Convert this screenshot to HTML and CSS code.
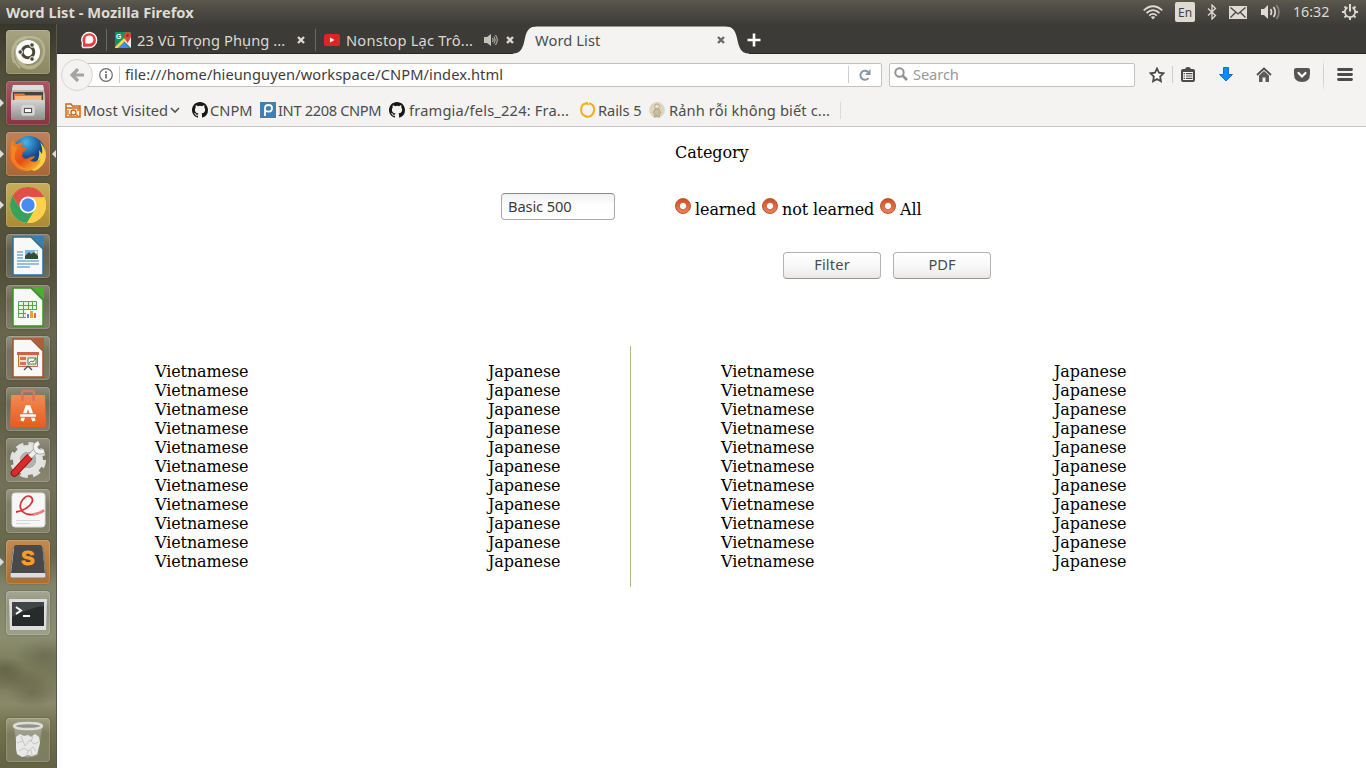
FILE: index.html
```html
<!DOCTYPE html>
<html lang="vi">
<head>
<meta charset="utf-8">
<title>Word List</title>
<link rel="stylesheet" href="styles.css">
</head>
<body>
<header class="panel">
  <span class="panel-title">Word List - Mozilla Firefox</span>
  <div class="indicators">
    <svg class="i-wifi" width="20" height="15" viewBox="0 0 20 15" fill="none" stroke="#dfdbd2" stroke-width="1.7"><path d="M.7 5.3Q10-2.8 19.3 5.3M3.5 8Q10 2.2 16.5 8M6.2 10.6Q10 7.3 13.8 10.6"/><path d="M7.8 12Q10 10.5 12.200 12L10 14.500z" fill="#dfdbd2" stroke="none"/></svg>
    <span class="lang">En</span>
    <svg class="i-bt" width="10" height="16" viewBox="0 0 10 16" fill="none" stroke="#dfdbd2" stroke-width="1.3"><path d="M1 4.500 8.500 11.500 5 15V1l3.500 3.500L1 11.500"/></svg>
    <svg class="i-mail" width="18" height="13" viewBox="0 0 18 13"><path fill="#dfdbd2" d="M0 0h18v13H0z"/><path d="m1.500 1.500 7.500 6.500 7.500-6.500M1.500 11.500l5-5M16.500 11.500l-5-5" fill="none" stroke="#48463f" stroke-width="1.300"/></svg>
    <svg class="i-vol" width="20" height="16" viewBox="0 0 20 16" fill="none" stroke-width="1.700"><path fill="#dfdbd2" d="M0 5h3l4-4v14l-4-4H0z"/><path stroke="#dfdbd2" d="M9.500 5q2 3 0 6M12.500 3q3.500 5 0 10"/><path stroke="#86837a" d="M15.500 1q5 7 0 14"/></svg>
    <span class="clock">16:32</span>
    <svg class="i-gear" width="16" height="16" viewBox="0 0 16 16" fill="none" stroke="#dfdbd2"><path stroke-width="1.800" d="M5.500 3.400a5.200 5.200 0 1 0 5 0"/><path stroke-width="2" d="M8 0v7.500M8 13v3M0 8h3M13 8h3"/><path stroke-width="1.800" d="m2.500 2.500 1.800 1.800M13.500 2.500l-1.800 1.800M2.500 13.500l1.800-1.800M13.500 13.500l-1.800-1.800"/></svg>
  </div>
</header>
<div class="desktop">
<nav class="launcher">
  <div class="tile t-dash"><svg viewBox="0 0 44 44"><g fill="none" stroke="#c9c5a5" stroke-width="2" opacity=".65"><path d="M8 33C2 15 13 4 29 8M14 38C1 26 7 9 21 8M30 37C15 43 7 29 11 15M37 28C30 43 16 38 11 26M36 13C43 28 31 39 18 36M22 7C38 6 42 19 34 32"/></g><circle cx="22" cy="22" r="12" fill="#fff"/><circle cx="22" cy="22" r="5.800" fill="none" stroke="#4b4734" stroke-width="3"/><g fill="#4b4734" stroke="#fff" stroke-width="1"><circle cx="14.200" cy="22" r="2.300"/><circle cx="26" cy="15" r="2.300"/><circle cx="26" cy="29" r="2.300"/></g></svg></div>
  <div class="tile t-files run"><svg viewBox="0 0 44 44"><defs><linearGradient id="cab" x2="0" y2="1"><stop stop-color="#d4d4d2"/><stop offset="1" stop-color="#8d8d8c"/></linearGradient></defs><path fill="#b8b8b6" d="M7 4h30l2 10v24H5V14z"/><path fill="#dcdcdb" d="M7 4h30l1 5H6z"/><path fill="#444" d="M7 11h30v9H7z"/><path fill="#e37839" d="M8 12.500h10l1.500 1.500H36v6H8z"/><path fill="#ffb878" d="M9 15h26v4H9z"/><rect x="5" y="19" width="34" height="20" rx="1.500" fill="url(#cab)"/><rect x="16" y="25" width="12" height="9" rx="1" fill="#c9c9c8" stroke="#e8e8e8"/><rect x="18.500" y="27.500" width="7" height="4" fill="#fff" stroke="#555"/></svg></div>
  <div class="tile t-firefox run focus"><svg viewBox="0 0 44 44"><defs><radialGradient id="globe" cx=".4" cy=".2"><stop stop-color="#49b6e8"/><stop offset="1" stop-color="#13478d"/></radialGradient><linearGradient id="fox" x2=".8" y2="1"><stop stop-color="#f68b1e"/><stop offset=".6" stop-color="#e44d18"/><stop offset="1" stop-color="#f7b62d"/></linearGradient></defs><circle cx="23" cy="20" r="16" fill="url(#globe)"/><path fill="#f9d244" d="M34 10q6 6 6 14-1 11-12 15l-9-5c13 0 15-8 14-16l3 4q1-6-2-12z"/><path fill="url(#fox)" d="M7 7q1 5 4 5 4-2 7-1-3 2-3 4l6 1q0 2-4 4l-1 4q3 5 8 1l5-1q-1 3-5 4 4 4 11-1-3 11-14 12Q8 39 4 28 2 17 7 7z"/><path fill="#f99c2b" d="M6 12q2 4 6 3-4 5-3 12 4 9 14 10Q8 39 5 27z" opacity=".55"/></svg></div>
  <div class="tile t-chrome run"><svg viewBox="0 0 44 44"><circle cx="22" cy="22" r="18" fill="#ffd04c"/><path fill="#df5148" d="M6.400 13A18 18 0 0 1 37.600 13L38.200 14H22z"/><path fill="#38a15c" d="M6.400 13A18 18 0 0 0 21 40l8-14-7-4-8 3z"/><path fill="#df5148" d="M6.400 13 14 25.500 22 14l-8-6z"/><path fill="#ffd04c" d="M22 14h16.200A18 18 0 0 1 21 40l9-14z"/><circle cx="22" cy="22" r="8.500" fill="#fff"/><circle cx="22" cy="22" r="6.700" fill="#4a8af4"/></svg></div>
  <div class="tile"><svg viewBox="0 0 44 44"><path fill="#f8f8f8" stroke="#286f9f" stroke-width="1.500" d="M7 3h18l12 12v26H7z"/><path fill="#3681b4" d="M26 2h12v12z"/><path stroke="#3385bb" stroke-width="1.200" d="M11 18h6M11 21h6M11 24h6M11 27h22M11 30h22M11 33h13"/><path fill="#77bce5" d="M19 16h13v9H19z"/><path fill="#354d33" d="m19 22 4-4 2 2 3-2 4 4v3H19z"/><circle cx="30" cy="18" r="1.500" fill="#fff2a0"/></svg></div>
  <div class="tile"><svg viewBox="0 0 44 44"><path fill="#f8f8f8" stroke="#37951e" stroke-width="1.500" d="M7 3h18l12 12v26H7z"/><path fill="#45b32a" d="M26 2h12v12z"/><path fill="#e5f5df" stroke="#58a743" d="M12.500 16.500h18v16h-18zM12 20.500h19M12 24.500h19M12 28.500h19M17.500 16v17M22.500 16v17M26.500 16v17"/><path fill="#fff" d="M20 25h12v9H20z"/><path fill="#3f93d1" d="M21 29h2v4h-2z"/><path fill="#f0a12b" d="M24 26h3v7h-3z"/><path fill="#e6674a" d="M28 28h2v5h-2z"/></svg></div>
  <div class="tile"><svg viewBox="0 0 44 44"><path fill="#f8f8f8" stroke="#a4512b" stroke-width="1.500" d="M7 3h18l12 12v26H7z"/><path fill="#b25d34" d="M26 2h12v12z"/><path fill="#cb6645" d="M11 16h22v3H11z"/><path fill="#f7ded2" stroke="#cb6645" d="M12.500 18.500h19v12h-19z"/><path fill="#c87758" d="M14 21h6v3h-6zM14 26h6v3h-6z"/><path fill="#fff" stroke="#348c4c" d="M22 22h8v6h-8zM23 27l2-2 2 1 3-4"/><path stroke="#555" stroke-width="1.500" d="m22 30-4 4M22 30l4 4"/></svg></div>
  <div class="tile"><svg viewBox="0 0 44 44"><defs><linearGradient id="bag" x2="0" y2="1"><stop stop-color="#f18a50"/><stop offset="1" stop-color="#e65c22"/></linearGradient></defs><path fill="none" stroke="#d8775f" stroke-width="2.500" d="M16 13V6q0-2 2-2h8q2 0 2 2v7"/><path fill="url(#bag)" d="M5 8h34l1 32H4z"/><path stroke="#d67358" stroke-width="2.500" d="M16.500 7v7M27.500 7v7"/><path fill="none" stroke="#fff" stroke-width="3.500" d="m16 34 5-14h2l5 14"/><path stroke="#ea6c34" stroke-width="4.500" d="M14 28.500h16"/><path stroke="#fff" stroke-width="2.500" d="M14 28.500h16"/></svg></div>
  <div class="tile"><svg viewBox="0 0 44 44"><circle cx="22" cy="22" r="16" fill="none" stroke="#e0e0df" stroke-width="4" stroke-dasharray="7.500 5.066"/><circle cx="22" cy="22" r="11.500" fill="none" stroke="#e3e3e2" stroke-width="7"/><circle cx="22" cy="22" r="8" fill="#b2b2b0"/><path stroke="#8a1010" stroke-width="7.500" stroke-linecap="round" d="m8.500 35 14-15"/><path stroke="#d92c28" stroke-width="5.500" stroke-linecap="round" d="m8.500 35 14-15"/><path stroke="#999" stroke-width="6" d="m24 18.500 7-7"/><path stroke="#eee" stroke-width="4.500" d="m24 18.500 8-8"/><path fill="none" stroke="#999" stroke-width="5.500" d="M33 5q-5 2-3 6 2 4 8 2"/><path fill="none" stroke="#f2f2f2" stroke-width="4" d="M33 5q-5 2-3 6 2 4 8 2"/></svg></div>
  <div class="tile"><svg viewBox="0 0 44 44"><rect x="6" y="4" width="33" height="34" rx="3" fill="#f7f7f7" stroke="#ddd"/><path fill="none" stroke="#d93233" stroke-width="1.800" d="M10 23C22 21 30 12 25 8 20 4 12 14 15 20c3 7 13 7 23 2"/><path stroke="#e58180" stroke-width="2.500" d="M27 25.500q7-1 11-4.500" fill="none"/><path stroke="#d5d5d5" d="M10 31.500h24M10 34.500h14"/></svg></div>
  <div class="tile t-sublime run"><svg viewBox="0 0 44 44"><path fill="#ddd" stroke="#777" d="m7 8-3 28q0 2 2 2h32q2 0 2-2L37 8z"/><path fill="#494949" d="M10 5h24q2 0 2.500 3L39 33H5L8 8q0-3 2-3z"/><text x="22" y="25" text-anchor="middle" font-family="Liberation Sans" font-weight="bold" font-size="20" fill="#ff9b27" stroke="#ff9b27">S</text></svg></div>
  <div class="tile"><svg viewBox="0 0 44 44"><path fill="#ddd" d="M3 8h38l-1 31H4z"/><path fill="#272b2c" d="M6 11h32v24H6z"/><path fill="#525656" d="M6 11h32v4q-12 1-32 11z" opacity=".6"/><path fill="none" stroke="#fff" stroke-width="2" d="m10 16 5 3.500-5 3.500M17 25h7"/></svg></div>
  <div class="tile t-trash"><svg viewBox="0 0 44 44"><path fill="#b7b8aa" opacity=".55" d="M8 10h28l-4 27q-10 5-20 0z"/><ellipse cx="22" cy="8" rx="14" ry="3" fill="#8f9388" stroke="#dcddd8" stroke-width="2.500"/><path fill="#e8e8e7" d="m10 19 4-3 4 2 4-1 3 2 4-3 4 3 1 6-3 11-5 2-4-1-6 2-5-3-1-5z"/><path fill="none" stroke="#c6c6c4" d="m11 25 6-2 2 5 5-6 4 4 5-2M13 33l5-3 4 3 5-4 3 4M15 18l2 5M27 18l-2 6M20 38l3-6M26 37l-1-5"/></svg></div>
</nav>
<main class="window">
  <div class="tabs">
    <svg class="pin" width="18" height="18" viewBox="0 0 18 18"><path d="M3 16.500 2 15q1-2-.3-6A7.500 7.500 0 1 1 9 16.500z" fill="#ed3c3d" stroke="#fff" stroke-width="1.300"/><circle cx="9.300" cy="8.500" r="4" fill="#fff"/><path fill="#fff" d="M5.300 8v4.500h4z"/></svg>
    <div class="tab tab-maps">
      <svg width="16" height="16" viewBox="0 0 16 16"><path fill="#15915f" d="M0 0h16v16H0z"/><path fill="#eee" d="M16 5v11L8 8z"/><path fill="#4b86ee" d="M3 16 9 10l5 6z"/><path fill="#f9d74b" d="m0 15 9-9 2 2-8 8H0z"/><text x="1" y="7" fill="#fff" font-family="Liberation Sans" font-weight="bold" font-size="7">G</text><path fill="#df4439" d="M12.500 11Q9 6 9 3.500a3.500 3.500 0 0 1 7 0Q16 6 12.500 11z"/><circle cx="12.500" cy="3.500" r="1.300" fill="#842721"/></svg>
      <span class="label l-maps">23 Vũ Trọng Phụng ...</span>
      <svg class="x" width="8" height="8" viewBox="0 0 8 8"><path d="m1 1 6 6M7 1 1 7"/></svg>
    </div>
    <div class="tab tab-yt">
      <svg width="16" height="12" viewBox="0 0 16 12"><rect width="16" height="12" rx="2.500" fill="#dc2626"/><path fill="#fff" d="m6 3.500 4.500 2.500L6 8.500z"/></svg>
      <span class="label l-yt">Nonstop Lạc Trô...</span>
      <svg class="snd" width="14" height="12" viewBox="0 0 14 12" fill="none" stroke="#c5c2ba"><path fill="#c5c2ba" stroke="none" d="M0 3h3l4-3v12L3 9H0z"/><path d="M8.500 4q1.500 2 0 4M10 2.500q2.500 3.500 0 7M11.500 1q3.500 5 0 10"/></svg>
      <svg class="x" width="8" height="8" viewBox="0 0 8 8"><path d="m1 1 6 6M7 1 1 7"/></svg>
    </div>
    <div class="tab tab-active">
      <svg class="shape" width="236" height="30" viewBox="0 0 236 30"><path d="M0 29.500C8 29.500 10 24 12 14 14 5 17 2.500 24 2.500H212C219 2.500 222 5 224 14 226 24 228 29.500 236 29.500V30H0z" fill="#f4f3f1"/></svg>
      <span class="label l-word">Word List</span>
      <svg class="x dark" width="8" height="8" viewBox="0 0 8 8"><path d="m1 1 6 6M7 1 1 7"/></svg>
    </div>
    <svg class="plus" width="14" height="14" viewBox="0 0 14 14"><path stroke="#fff" stroke-width="2.600" d="M7 .5v13M.5 7h13"/></svg>
  </div>
  <div class="navbar">
    <div class="back"><svg width="14" height="14" viewBox="0 0 14 14"><path fill="none" stroke="#a5a4a3" stroke-width="3.200" d="M8 1 2 7l6 6M2 7h12"/></svg></div>
    <div class="urlbar">
      <svg width="14" height="14" viewBox="0 0 14 14"><circle cx="7" cy="7" r="6.300" fill="none" stroke="#6c6c6c" stroke-width="1.200"/><path stroke="#6c6c6c" stroke-width="1.700" d="M7 6v4.500M7 3.200v1.700"/></svg>
      <i class="sep"></i><span class="url">file:///home/hieunguyen/workspace/CNPM/index.html</span><i class="sep"></i>
      <svg class="reload" width="12" height="12" viewBox="0 0 12 12"><path fill="none" stroke="#8796a6" stroke-width="2" d="M9.500 9A4.500 4.500 0 1 1 9 3"/><path fill="#8796a6" d="M11.500 0v6H6z"/></svg>
    </div>
    <div class="search"><svg width="14" height="14" viewBox="0 0 14 14"><circle cx="5.500" cy="5.500" r="4.200" fill="none" stroke="#929292" stroke-width="2"/><path stroke="#929292" stroke-width="2.500" d="m8.500 8.500 4.500 4.500"/></svg><span>Search</span></div>
    <div class="tools">
      <svg width="16" height="16" viewBox="0 0 16 16"><path fill="#fff" stroke="#4b4b4b" stroke-width="1.800" d="m8 1.500 1.900 4.200 4.600.6-3.400 3.200.8 4.700L8 12l-3.900 2.200.8-4.700-3.400-3.200 4.600-.6z"/></svg>
      <i class="sep s1"></i>
      <svg class="list" width="14" height="15" viewBox="0 0 14 15"><rect x="1" y="3" width="12" height="11" rx="1" fill="#fff" stroke="#4b4b4b" stroke-width="2"/><path fill="#4b4b4b" d="M4 3q0-3 3-3t3 3zM1 3h12v2H1z"/><path stroke="#4b4b4b" stroke-width="1.200" d="M2.500 6.600H4M5 6.600h6.500M2.500 9H4M5 9h6.500M2.500 11.400H4M5 11.400h6.500"/></svg>
      <svg class="dl" width="14" height="15" viewBox="0 0 14 15"><path fill="#0c8cff" stroke="#0672d8" d="M4.500.5h5v7h4L7 14 .5 7.500h4z"/></svg>
      <svg class="home" width="16" height="15" viewBox="0 0 16 15"><path fill="none" stroke="#4d4d4d" stroke-width="1.800" d="m1 8 7-6.500L15 8"/><path fill="#5b5b5b" d="m8 4 5 4.500V15H9.500v-4.500h-3V15H3V8.500z"/></svg>
      <svg class="pocket" width="16" height="14" viewBox="0 0 16 14"><path fill="#555" d="M2 0h12q2 0 2 2v4q0 8-8 8T0 6V2q0-2 2-2z"/><path fill="none" stroke="#fff" stroke-width="2.200" stroke-linecap="round" d="m4.500 5 3.500 3.500L11.500 5"/></svg>
      <i class="sep s2"></i>
      <svg class="menu" width="16" height="14" viewBox="0 0 16 14"><path stroke="#4b4b4b" stroke-width="2.800" stroke-linecap="round" d="M1.500 1.500h13M1.500 6.500h13M1.500 11.500h13"/></svg>
    </div>
  </div>
  <div class="bookmarks">
    <div class="bm b1"><svg width="16" height="16" viewBox="0 0 16 16"><path fill="#fff5e9" stroke="#cf6716" stroke-width="1.500" d="M1 15V2h5l1.500 2H15v11zM1 6h14"/><circle cx="8.500" cy="10.500" r="2.500" fill="none" stroke="#cf6716" stroke-width="1.300"/><path stroke="#cf6716" stroke-width="1.300" d="m10 12 3 2M3 8v5M12 8h2M4 13h3"/></svg><span>Most Visited</span><svg class="chev" width="10" height="7" viewBox="0 0 10 7"><path fill="none" stroke="#555" stroke-width="1.700" d="m1 1 4 4 4-4"/></svg></div>
    <div class="bm b2"><svg width="16" height="16" viewBox="0 0 16 16"><use href="#octocat"/></svg><span>CNPM</span></div>
    <div class="bm b3"><svg width="16" height="16" viewBox="0 0 16 16"><path fill="#427faf" d="M0 0h16v16H0z"/><path fill="none" stroke="#fff" stroke-width="1.800" d="M5 14V6q0-3 3.500-3t3.500 3.300-3.500 3.300Q6 9.600 5 8"/></svg><span>INT 2208 CNPM</span></div>
    <div class="bm b4"><svg width="16" height="16" viewBox="0 0 16 16"><path id="octocat" fill="#191717" d="M8 0C3.580 0 0 3.580 0 8c0 3.540 2.290 6.530 5.470 7.590.4.070.550-.170.550-.380 0-.190-.010-.820-.010-1.490-2.010.370-2.530-.490-2.690-.940-.090-.230-.480-.940-.820-1.130-.280-.150-.680-.520-.010-.530.630-.010 1.080.580 1.230.820.720 1.210 1.870.870 2.330.660.070-.520.280-.870.510-1.070-1.780-.200-3.640-.890-3.640-3.950 0-.870.310-1.590.820-2.150-.080-.200-.360-1.020.080-2.120 0 0 .670-.210 2.200.820a7.600 7.600 0 0 1 4 0c1.530-1.040 2.200-.820 2.200-.820.440 1.100.160 1.920.080 2.120.510.560.820 1.270.820 2.150 0 3.070-1.870 3.750-3.650 3.950.290.250.540.730.540 1.480 0 1.070-.010 1.930-.010 2.200 0 .210.150.460.550.380A8 8 0 0 0 16 8c0-4.420-3.580-8-8-8z"/></svg><span>framgia/fels_224: Fra...</span></div>
    <div class="bm b5"><svg width="16" height="16" viewBox="0 0 16 16"><path fill="none" stroke="#f3ad17" stroke-width="2" d="M6 1.500C0 2-.5 12 5 14q4 2 7-1c4-5 2-11-3-11.500M6.500 0l1.500 3"/></svg><span>Rails 5</span></div>
    <div class="bm b6"><svg width="16" height="16" viewBox="0 0 16 16"><circle cx="8" cy="8" r="7.900" fill="#ded5bd"/><circle cx="8" cy="4.500" r="2.500" fill="#e9dfc9" stroke="#b5a88d"/><path fill="#c9bc9f" stroke="#ab9d82" stroke-width=".7" d="M6 7h4l2 4-2 1 1 3H9l-1-2-1 2H5l1-3-2-1z"/></svg><span>Rảnh rỗi không biết c...</span></div>
    <i class="sep"></i>
  </div>
  <section class="page">
    <div class="category">Category</div>
    <div class="filters">
      <div class="select">Basic 500</div>
      <div class="radios"><i class="radio"></i><span class="r1">learned</span><i class="radio"></i><span class="r2">not learned</span><i class="radio"></i><span>All</span></div>
    </div>
    <div class="buttons"><button class="f">Filter</button><button class="p">PDF</button></div>
    <div class="words">
      <div class="half left">
        <div class="vn">Vietnamese<br>Vietnamese<br>Vietnamese<br>Vietnamese<br>Vietnamese<br>Vietnamese<br>Vietnamese<br>Vietnamese<br>Vietnamese<br>Vietnamese<br>Vietnamese</div>
        <div>Japanese<br>Japanese<br>Japanese<br>Japanese<br>Japanese<br>Japanese<br>Japanese<br>Japanese<br>Japanese<br>Japanese<br>Japanese</div>
      </div>
      <div class="half right">
        <div class="vn">Vietnamese<br>Vietnamese<br>Vietnamese<br>Vietnamese<br>Vietnamese<br>Vietnamese<br>Vietnamese<br>Vietnamese<br>Vietnamese<br>Vietnamese<br>Vietnamese</div>
        <div>Japanese<br>Japanese<br>Japanese<br>Japanese<br>Japanese<br>Japanese<br>Japanese<br>Japanese<br>Japanese<br>Japanese<br>Japanese</div>
      </div>
    </div>
  </section>
</main>
</div>
</body>
</html>
```
FILE: styles.css
```css
* { box-sizing: border-box; }
body { margin: 0; width: 1366px; height: 768px; overflow: hidden; display: flex; flex-direction: column; background: #fff; font: 14.67px/20px "Noto Sans", "Open Sans", sans-serif; color: #4c4c4c; }
svg { display: block; flex: none; }
span { white-space: nowrap; flex: none; }

.panel { height: 24px; flex: none; display: flex; align-items: center; justify-content: space-between; padding: 0 8px 0 6px; color: #dfdbd2; background: linear-gradient(#5b584c, #504e46 30%, #3e3d39); }
.panel-title { font-weight: bold; font-size: 14.67px; letter-spacing: .02px; }
.indicators { display: flex; align-items: center; }
.lang { width: 20px; height: 20px; margin: 0 12px 0 12px; border-radius: 2px; background: #dfdbd2; color: #45433d; font-size: 12px; line-height: 21px; text-align: center; }
.i-mail { margin-left: 12px; }
.i-vol { margin-left: 14px; }
.clock { width: 37px; margin: 0 12px; font-size: 14.2px; }

.desktop { flex: 1; display: flex; min-height: 0; }
.launcher { width: 57px; flex: none; height: 744px; padding: 6px 7px 6px 6px; display: flex; flex-direction: column; gap: 7px; border-right: 1px solid #5b5a4a; background: radial-gradient(ellipse 36px 12px at 12px 656px, rgba(94,92,66,.5), transparent), radial-gradient(ellipse 24px 16px at 32px 668px, rgba(94,92,66,.5), transparent), radial-gradient(ellipse 30px 18px at 45px 632px, rgba(90,90,68,.5), transparent), radial-gradient(ellipse 22px 12px at 5px 645px, rgba(85,88,65,.6), transparent), linear-gradient(#38372b 0, #4f4c38 45px, #5e5b43 130px, #504d38 240px, #69664e 310px, #5d5c44 380px, #737157 460px, #66674b 530px, #80836a 560px, #8b8e70 612px, #777957 650px, #89896b 680px, #74744f 700px, #626244 744px); }
.tile { width: 44px; height: 44px; flex: none; position: relative; border-radius: 4px; background: linear-gradient(rgba(255,255,255,.28), rgba(255,255,255,.1) 35%, rgba(255,255,255,.16)); box-shadow: inset 0 0 0 1px rgba(255,255,255,.17), 0 0 2px rgba(0,0,0,.3); }
.tile svg { width: 44px; height: 44px; }
.t-dash { background: linear-gradient(#a5a382, #8b875f); }
.t-files { background: linear-gradient(#a65760, #86343f); }
.t-firefox { background: linear-gradient(#be8159, #a96735); }
.t-chrome { background: linear-gradient(#c7ad5c, #aa8b32); }
.t-sublime { background: linear-gradient(#c18b51, #b06c28); }
.t-trash { margin-top: auto; }
.run::before, .focus::after { content: ""; position: absolute; top: 18px; left: -6px; border: 4px solid transparent; border-left-color: #ddd; border-right-width: 0; }
.focus::after { left: auto; right: -6px; border: 4px solid transparent; border-right-color: #ddd; border-left-width: 0; }

.window { width: 1309px; flex: none; display: flex; flex-direction: column; }
.tabs { height: 30px; flex: none; display: flex; padding-left: 23px; background: #3c3b37; border-bottom: 1px solid #292825; color: #dcd8cf; }
.pin { margin: 7px 8px 0 0; }
.tab { display: flex; align-items: center; height: 32px; }
.tab-maps, .tab-yt { background: linear-gradient(#6b6964, #6b6964) 0 5px / 1px 22px no-repeat; }
.tab-maps { width: 209px; padding-left: 9px; }
.tab-yt { width: 201px; padding-left: 9px; }
.label { margin: 0 0 1px 6px; }
.l-maps { width: 154px; letter-spacing: .08px; }
.l-yt { width: 138px; letter-spacing: .2px; }
.x { margin-left: 6px; }
.x path { stroke: #dcd8cf; stroke-width: 2.4; }
.snd { margin-right: 2px; }
.tab-active { position: relative; width: 232px; height: 32px; padding-left: 19px; color: #4c4c4c; margin-left: -2px; }
.shape { position: absolute; left: -1px; top: 0; }
.l-word { width: 178px; margin-left: 2px; position: relative; letter-spacing: .1px; }
.dark { position: relative; margin-left: 4px; }
.dark path { stroke: #6b6965; }
.plus { margin: 9px 0 0 1px; position: relative; }

.navbar { height: 41px; flex: none; display: flex; align-items: center; background: #f4f3f1; padding-left: 4px; }
.back { width: 32px; height: 32px; flex: none; border: 1px solid #d8d6d4; border-radius: 50%; display: grid; place-items: center; background: #f4f3f1; position: relative; z-index: 1; }
.urlbar { width: 797px; height: 24px; margin-left: -8px; flex: none; background: #fff; border: 1px solid #c4c2be; border-radius: 2px; display: flex; align-items: center; padding-left: 13px; color: #3c3c3c; }
.sep { width: 1px; height: 17px; background: #cfcdca; flex: none; }
.urlbar .sep:nth-of-type(1) { margin: 0 5px 0 6px; }
.url { width: 723px; letter-spacing: .07px; }
.url, .search span { margin-bottom: 2px; }
.reload { margin-left: 10px; }
.search { width: 246px; height: 24px; margin-left: 7px; flex: none; background: #fff; border: 1px solid #c4c2be; border-radius: 2px; display: flex; align-items: center; gap: 5px; padding-left: 4px; color: #999; letter-spacing: -.1px; }
.search svg { margin-bottom: 1px; }
.tools { display: flex; align-items: center; margin-left: 14px; }
.s1 { margin: 0 8px 0 7px; }
.dl { margin-left: 24px; }
.home { margin-left: 23px; }
.pocket { margin-left: 22px; }
.s2 { height: 34px; margin: 0 13px; background: linear-gradient(transparent, #d2d0cd 30% 70%, transparent); }

.bookmarks { height: 32px; flex: none; display: flex; padding: 0 0 1px 8px; align-items: center; background: #f4f3f1; border-bottom: 1px solid #c8c6c3; }
.bookmarks .sep { background: #dbd9d6; }
.bm { display: flex; align-items: center; gap: 2px; }
.b1 { width: 127px; letter-spacing: .08px; } .b2 { width: 68px; } .b3 { width: 129px; letter-spacing: -.36px; } .b4 { width: 191px; gap: 4px; letter-spacing: .17px; } .b5 { width: 69px; letter-spacing: -.1px; } .b6 { width: 191px; gap: 4px; letter-spacing: .12px; }

.page { flex: 1; padding-top: 16px; color: #000; font: 16px/19px "DejaVu Serif", serif; letter-spacing: -.1px; }
.category { margin-left: 618px; }
.filters { display: flex; margin: 31px 0 0 444px; height: 27px; }
.select { width: 114px; height: 27px; margin-right: 60px; padding-left: 6px; border: 1px solid #aaa; border-top-color: #888; border-radius: 4px; background: linear-gradient(#f0f0f0, #fdfdfd 40%, #fff); font: 14.67px/24px "Noto Sans", sans-serif; letter-spacing: -.12px; color: #3c3c3c; }
.radios { display: flex; padding-top: 7px; }
.radio { width: 16px; height: 16px; margin: -2px 4px 0 0; border-radius: 50%; border: 1px solid #bd502d; background: radial-gradient(circle, #fff 0 2.6px, #cf6a43 3.6px, transparent 4px), linear-gradient(#cf4f20, #e98361); }
.r1, .r2 { width: 61px; margin-right: 6px; }
.r2 { width: 92px; }
.buttons { display: flex; gap: 12px; margin: 32px 0 0 726px; }
button { width: 98px; height: 27px; padding: 0 0 2px; border: 1px solid #b4b2b0; border-bottom-color: #979593; border-radius: 4px; background: linear-gradient(#fff, #f9f9f9 50%, #eae9e8); font: 14.67px/23px "Noto Sans", sans-serif; color: #4c4c4c; }
.f { letter-spacing: .15px; }
.words { display: flex; margin: 67px 0 0 98px; }
.half { height: 241px; padding-top: 16px; display: flex; }
.left { width: 476px; border-right: 1px solid #b5b683; }
.right { padding-left: 90px; }
.vn { width: 333px; }
```
